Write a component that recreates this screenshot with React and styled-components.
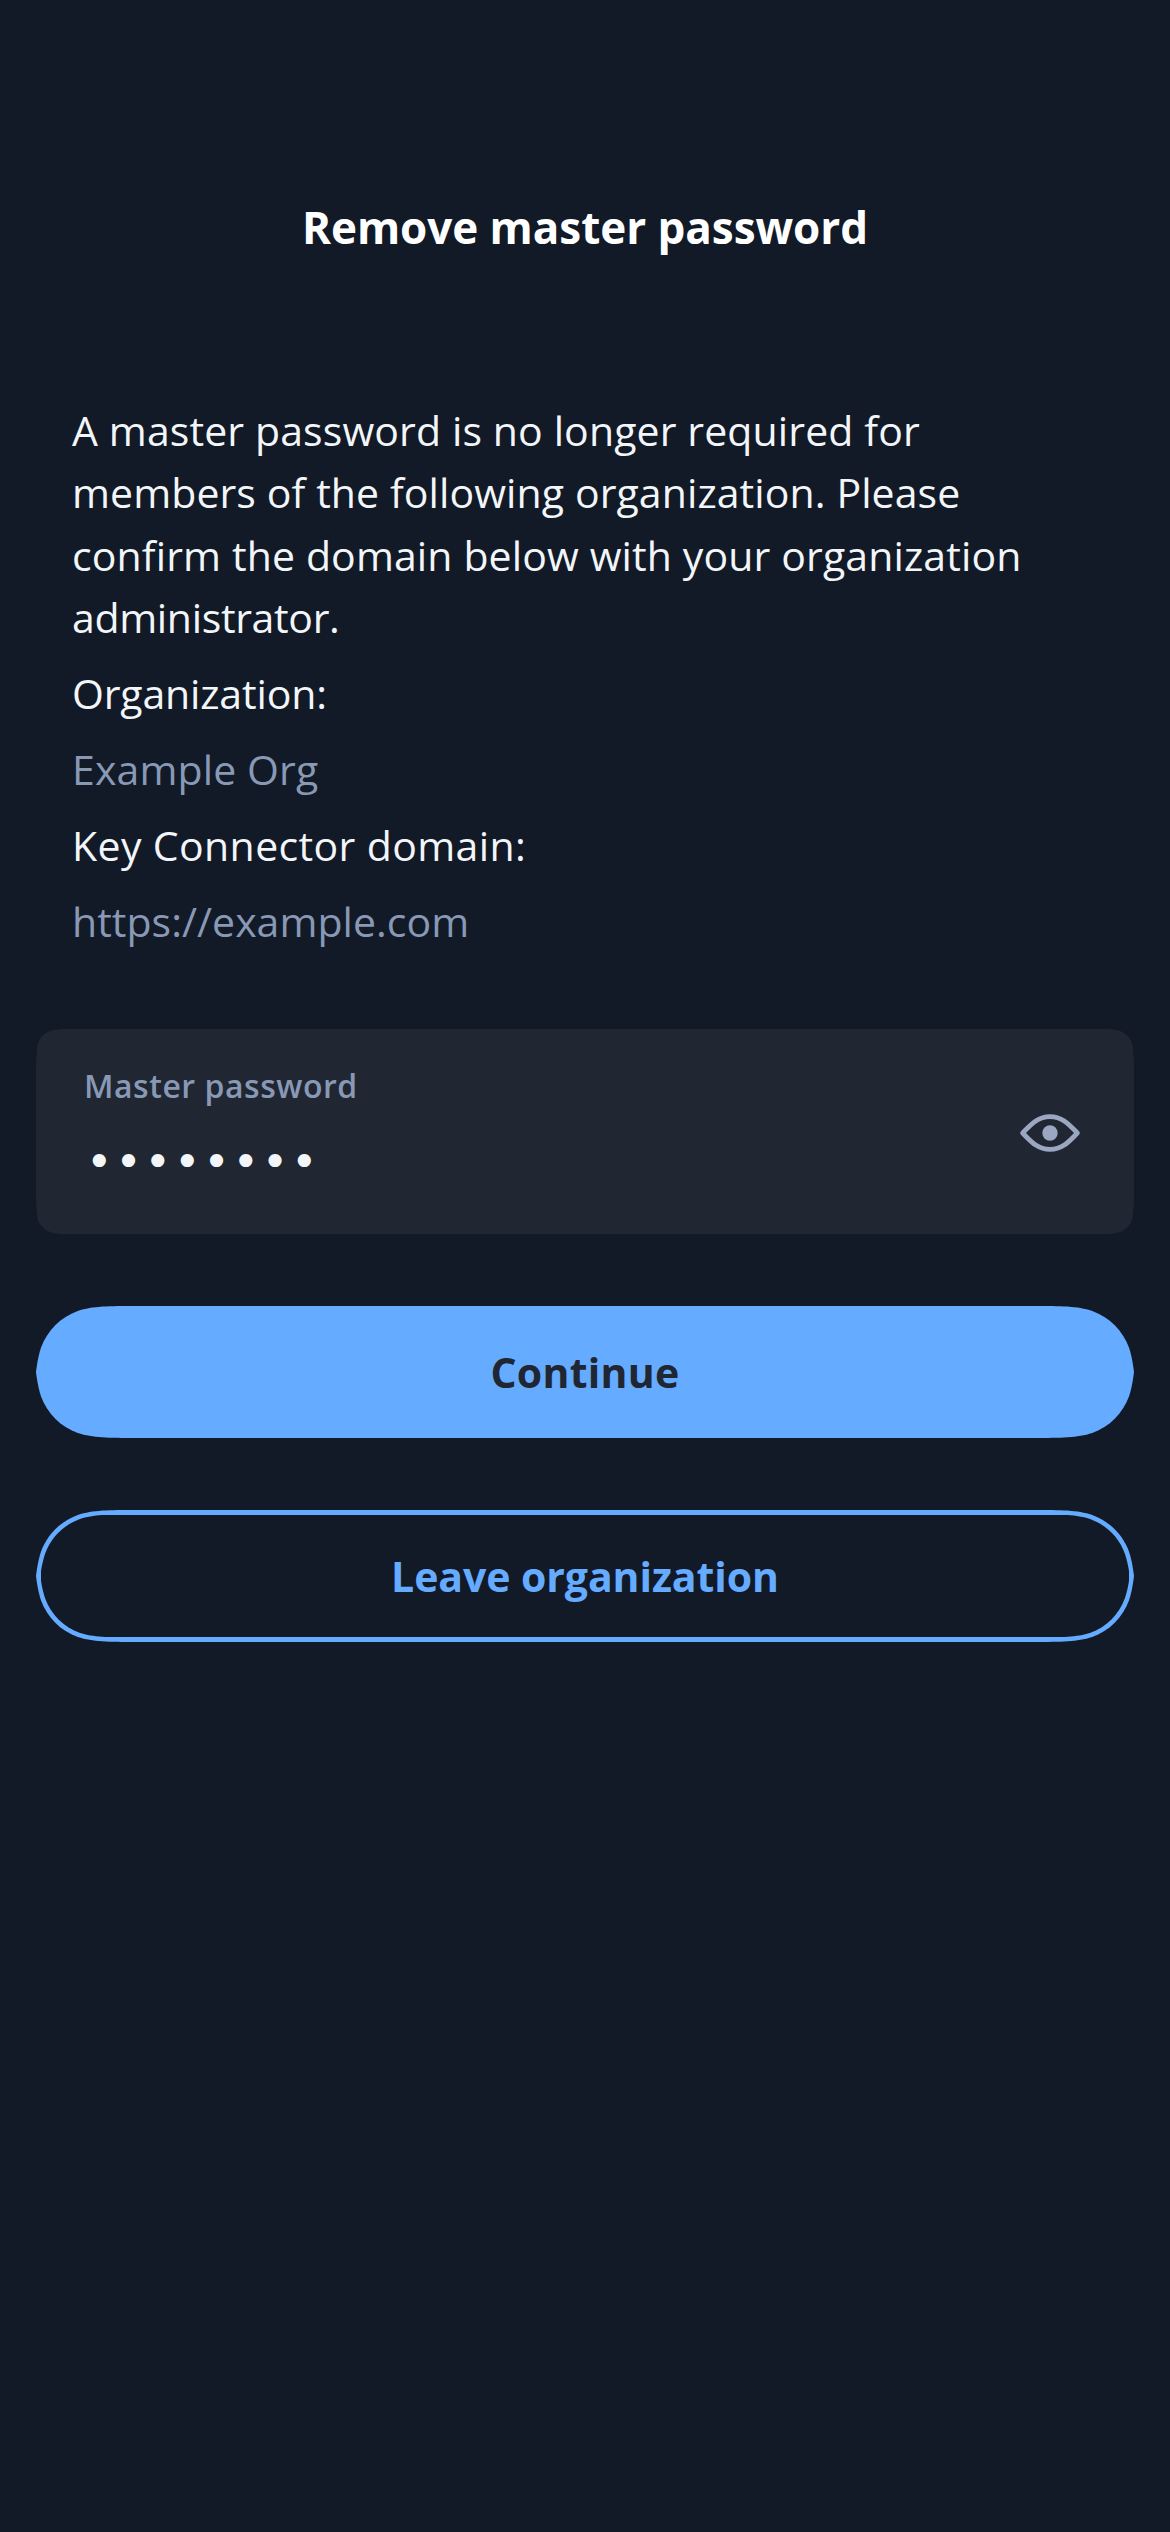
import React from 'react';
import styled, { createGlobalStyle } from 'styled-components';

const color = {
  background: '#121a27',
  surface: '#202733',
  text: '#f3f6f9',
  muted: '#8898b5',
  icon: '#9ba6c0',
  accent: '#65abff',
};

/* Continuous-corner outline. `tip` shapes the end of the curve down the side. */
function smoothRect(w, h, r, tip = 0.12) {
  const a = 1.528665 * r;
  const e = Math.min(a, h / 2);
  const s = 0.07491139 * r;
  const k = 0.63149379 * r;
  const m = 0.37282383 * r;
  const n = 0.16905956 * r;
  const t1 = k + (e - k) * 0.35;
  const t2 = k + (e - k) * 0.8;
  const x1 = s * 0.42;
  const x2 = s * tip;
  return `M${a} 0H${w - a}C${w - 1.0885 * r} 0 ${w - 0.8684 * r} 0 ${w - k} ${s}C${w - m} ${n} ${w - n} ${m} ${w - s} ${k}C${w - x1} ${t1} ${w - x2} ${t2} ${w} ${e}V${h - e}C${w - x2} ${h - t2} ${w - x1} ${h - t1} ${w - s} ${h - k}C${w - n} ${h - m} ${w - m} ${h - n} ${w - k} ${h - s}C${w - 0.8684 * r} ${h} ${w - 1.0885 * r} ${h} ${w - a} ${h}H${a}C${1.0885 * r} ${h} ${0.8684 * r} ${h} ${k} ${h - s}C${m} ${h - n} ${n} ${h - m} ${s} ${h - k}C${x1} ${h - t1} ${x2} ${h - t2} 0 ${h - e}V${e}C${x2} ${t2} ${x1} ${t1} ${s} ${k}C${n} ${m} ${m} ${n} ${k} ${s}C${0.8684 * r} 0 ${1.0885 * r} 0 ${a} 0Z`;
}

const GlobalStyle = createGlobalStyle`
  * { box-sizing: border-box; }
  body { margin: 0; background: ${color.background}; }
`;

const Screen = styled.main`
  display: flex;
  flex-direction: column;
  width: 1170px;
  height: 2532px;
  padding: 0 36px;
  overflow: hidden;
  background: ${color.background};
  color: ${color.text};
  font-family: 'Open Sans', 'Noto Sans', sans-serif;
`;

const NavBar = styled.header`
  display: flex;
  justify-content: center;
  height: 399px;
  padding-top: 197px;
`;

const Title = styled.h1`
  margin: 0;
  color: #fff;
  font-size: 44px;
  font-weight: 700;
  line-height: 60px;
  letter-spacing: -0.04px;
`;

const Details = styled.section`
  display: flex;
  flex-direction: column;
  gap: 13.67px;
  height: 630px;
  padding-left: 36px;
`;

const Text = styled.p`
  margin: 0;
  color: ${(p) => (p.$muted ? color.muted : color.text)};
  font-size: 41px;
  line-height: 62.33px;
  white-space: nowrap;
  letter-spacing: ${(p) => p.$track || 0}px;
`;

const Line = styled.span`
  display: block;
  letter-spacing: ${(p) => p.$track}px;
`;

const Field = styled.label`
  display: flex;
  align-items: center;
  justify-content: space-between;
  height: 205px;
  margin-bottom: 72px;
  padding: 0 52px 0 48px;
  background: ${color.surface};
  clip-path: path('${smoothRect(1098, 205, 23)}');
`;

const FieldContent = styled.span`
  display: flex;
  flex-direction: column;
  gap: 26px;
  height: 131px;
`;

const FieldLabel = styled.span`
  color: ${color.muted};
  font-size: 32px;
  font-weight: 600;
  line-height: 40px;
  letter-spacing: 0.53px;
`;

const Secret = styled.span`
  padding-left: 2px;
  font-family: 'DejaVu Sans', sans-serif;
  font-size: 45px;
  line-height: 60px;
  letter-spacing: 2.75px;
`;

const EyeIcon = styled.svg`
  width: 64px;
  height: 42px;
  margin-top: 2px;
`;

const Actions = styled.div`
  display: flex;
  flex-direction: column;
  gap: 72px;
`;

const Button = styled.button`
  display: flex;
  height: 132px;
  padding: ${(p) => (p.$outline ? '4.6px' : '0')};
  border: 0;
  background: ${color.accent};
  color: ${(p) => (p.$outline ? color.accent : color.surface)};
  font: inherit;
  font-size: 41px;
  font-weight: 700;
  letter-spacing: ${(p) => p.$track}px;
  clip-path: path('${smoothRect(1098, 132, 66)}');
`;

const ButtonFace = styled.span`
  display: flex;
  flex: 1;
  align-items: center;
  justify-content: center;
  height: 100%;
  padding-bottom: 1px;
  background: ${(p) => (p.$outline ? color.background : color.accent)};
  clip-path: ${(p) => (p.$outline ? `path('${smoothRect(1088.8, 122.8, 61.5, 0)}')` : 'none')};
`;

export default function App() {
  return (
    <>
      <GlobalStyle />
      <Screen>
        <NavBar>
          <Title>Remove master password</Title>
        </NavBar>
        <Details>
          <Text>
            <Line $track={0.12}>A master password is no longer required for</Line>
            <Line $track={0.095}>members of the following organization. Please</Line>
            <Line $track={0.125}>confirm the domain below with your organization</Line>
            <Line $track={-0.33}>administrator.</Line>
          </Text>
          <Text $track={-0.15}>Organization:</Text>
          <Text $muted $track={0.12}>Example Org</Text>
          <Text $track={0.38}>Key Connector domain:</Text>
          <Text $muted $track={0.03}>https://example.com</Text>
        </Details>
        <Field>
          <FieldContent>
            <FieldLabel>Master password</FieldLabel>
            <Secret>••••••••</Secret>
          </FieldContent>
          <EyeIcon viewBox="0 0 64 42" fill="none">
            <path
              d="M4.6 21C13 12.400 19.500 4.600 32 4.600S51 12.400 59.400 21C51 29.600 44.500 37.400 32 37.400S13 29.600 4.600 21Z"
              stroke={color.icon}
              strokeWidth="4.8"
              strokeLinejoin="round"
            />
            <circle cx="32" cy="21" r="7.7" fill={color.icon} />
          </EyeIcon>
        </Field>
        <Actions>
          <Button $track={0.29}>
            <ButtonFace>Continue</ButtonFace>
          </Button>
          <Button $outline $track={-0.07}>
            <ButtonFace $outline>Leave organization</ButtonFace>
          </Button>
        </Actions>
      </Screen>
    </>
  );
}
